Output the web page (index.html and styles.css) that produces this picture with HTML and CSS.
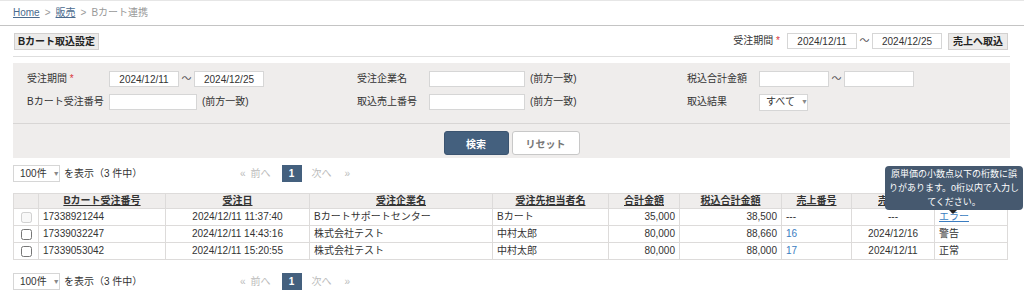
FILE: index.html
```html
<!DOCTYPE html>
<html lang="ja">
  <head>
    <meta charset="UTF-8" />
    <title>Bカート連携</title>
    <link rel="stylesheet" href="styles.css">
  </head>
  <body>
    <div class="breadcrumb">
      <a href="#">Home</a><span class="sep">&gt;</span><a href="#">販売</a><span class="sep">&gt;</span><span class="current">Bカート連携</span>
    </div>

    <div class="page">
      <div class="toolbar">
        <button class="btn">Bカート取込設定</button>
        <div class="import">
          <span class="import-label">受注期間 <em>*</em></span>
          <input class="field date" type="text" value="2024/12/11" />
          <span class="tilde">〜</span>
          <input class="field date" type="text" value="2024/12/25" />
          <button class="btn">売上へ取込</button>
        </div>
      </div>

      <div class="search">
        <div class="fields">
          <div class="cell">
            <label>受注期間 <em>*</em></label>
            <input class="field date" type="text" value="2024/12/11" />
            <span class="tilde">〜</span>
            <input class="field date" type="text" value="2024/12/25" />
          </div>
          <div class="cell short">
            <label>受注企業名</label>
            <input class="field wide" type="text" />
            <span class="hint">(前方一致)</span>
          </div>
          <div class="cell short">
            <label>税込合計金額</label>
            <input class="field amount" type="text" />
            <span class="tilde">〜</span>
            <input class="field amount" type="text" />
          </div>
          <div class="cell">
            <label>Bカート受注番号</label>
            <input class="field mid" type="text" />
            <span class="hint">(前方一致)</span>
          </div>
          <div class="cell short">
            <label>取込売上番号</label>
            <input class="field wide" type="text" />
            <span class="hint">(前方一致)</span>
          </div>
          <div class="cell short">
            <label>取込結果</label>
            <span class="dropdown result">すべて <i>▼</i></span>
          </div>
        </div>
        <div class="actions">
          <button class="btn-search">検索</button>
          <button class="btn-reset">リセット</button>
        </div>
      </div>

      <div class="pager-row">
        <div class="per-page">
          <span class="dropdown">100件 <i>▼</i></span>
          <span>を表示（3 件中）</span>
        </div>
        <div class="pager">
          <span class="off">«</span><span class="off">前へ</span><span class="current-page">1</span><span class="off">次へ</span><span class="off">»</span>
        </div>
      </div>

      <table class="orders">
        <thead>
          <tr>
            <th></th>
            <th><u>Bカート受注番号</u></th>
            <th><u>受注日</u></th>
            <th><u>受注企業名</u></th>
            <th><u>受注先担当者名</u></th>
            <th><u>合計金額</u></th>
            <th><u>税込合計金額</u></th>
            <th><u>売上番号</u></th>
            <th><u>売上日</u></th>
            <th><u>結果</u></th>
          </tr>
        </thead>
        <tbody>
          <tr>
            <td class="chk"><input type="checkbox" disabled /></td>
            <td>17338921244</td>
            <td class="center">2024/12/11 11:37:40</td>
            <td>Bカートサポートセンター</td>
            <td>Bカート</td>
            <td class="num">35,000</td>
            <td class="num">38,500</td>
            <td>---</td>
            <td class="center">---</td>
            <td><span class="err"><a href="#">エラー</a><span class="tip">原単価の小数点以下の桁数に誤<br />りがあります。0桁以内で入力し<br />てください。</span></span></td>
          </tr>
          <tr>
            <td class="chk"><input type="checkbox" /></td>
            <td>17339032247</td>
            <td class="center">2024/12/11 14:43:16</td>
            <td>株式会社テスト</td>
            <td>中村太郎</td>
            <td class="num">80,000</td>
            <td class="num">88,660</td>
            <td><a class="plain" href="#">16</a></td>
            <td class="center">2024/12/16</td>
            <td>警告</td>
          </tr>
          <tr>
            <td class="chk"><input type="checkbox" /></td>
            <td>17339053042</td>
            <td class="center">2024/12/11 15:20:55</td>
            <td>株式会社テスト</td>
            <td>中村太郎</td>
            <td class="num">80,000</td>
            <td class="num">88,000</td>
            <td><a class="plain" href="#">17</a></td>
            <td class="center">2024/12/11</td>
            <td>正常</td>
          </tr>
        </tbody>
      </table>

      <div class="pager-row bottom">
        <div class="per-page">
          <span class="dropdown">100件 <i>▼</i></span>
          <span>を表示（3 件中）</span>
        </div>
        <div class="pager">
          <span class="off">«</span><span class="off">前へ</span><span class="current-page">1</span><span class="off">次へ</span><span class="off">»</span>
        </div>
      </div>
    </div>
  </body>
</html>
```

FILE: styles.css
```css
body {
  margin: 0;
  background-color: #fff;
  color: #333;
  font-family: "Liberation Sans Narrow", "Liberation Sans", "Noto Sans CJK JP", sans-serif;
  font-size: 10px;
  line-height: 14px;
}

input,
button {
  font-family: inherit;
  font-size: 10px;
}

em {
  color: #d9343a;
  font-style: normal;
}

/* パンくず */
.breadcrumb {
  height: 24px;
  padding-left: 13px;
  display: flex;
  align-items: center;
  border-top: 1px solid #e6e6e6;
  border-bottom: 1px solid #c4c4c4;
  color: #999;
  white-space: nowrap;
}

.breadcrumb a {
  color: #4a6a8e;
}

.breadcrumb .sep {
  margin: 0 5px;
  color: #999;
}

.page {
  position: relative;
  padding: 0 14px 0 13px;
  white-space: nowrap;
}

/* ツールバー */
.toolbar {
  height: 30px;
  display: flex;
  align-items: center;
  justify-content: space-between;
  border-bottom: 1px solid #dedede;
}

.btn {
  height: 17px;
  padding: 0 7px;
  background-color: #ecebea;
  border: 1px solid #d2d0cf;
  color: #222;
  font-weight: bold;
  line-height: 15px;
}

.toolbar > .btn {
  width: 85px;
  padding: 0;
  margin-left: 1px;
}

.import {
  display: flex;
  align-items: center;
  padding-right: 2px;
}

.import-label {
  margin-right: 7px;
}

.import .btn {
  margin-left: 6px;
  width: 60px;
  padding: 0;
}

.field {
  height: 16px;
  box-sizing: border-box;
  border: 1px solid #d6d6d6;
  background-color: #fff;
  padding: 0 3px;
  color: #333;
  line-height: 14px;
}

.field.date {
  width: 70px;
  text-align: center;
}

.tilde {
  width: 15px;
  text-align: center;
  color: #555;
}

/* 検索パネル */
.search {
  margin-top: 6px;
  background-color: #efedec;
}

.fields {
  display: grid;
  grid-template-columns: 330px 330px 1fr;
  row-gap: 7px;
  padding: 8px 14px 13px;
  border-bottom: 1px solid #d8d6d5;
}

.cell {
  display: flex;
  align-items: center;
  height: 16px;
}

.cell label {
  width: 82px;
  flex-shrink: 0;
}

.cell.short label {
  width: 72px;
}

.field.wide {
  width: 96px;
}

.field.mid {
  width: 88px;
}

.field.amount {
  width: 70px;
}

.hint {
  margin-left: 5px;
}

.dropdown {
  display: inline-flex;
  align-items: center;
  justify-content: space-between;
  box-sizing: border-box;
  height: 17px;
  padding: 0 5px 0 6px;
  background-color: #fff;
  border: 1px solid #d6d6d6;
  white-space: nowrap;
}

.dropdown i {
  font-style: normal;
  font-size: 7px;
  color: #888;
  margin-left: 6px;
}

.dropdown.result {
  width: 49px;
}

.actions {
  display: flex;
  justify-content: center;
  gap: 3px;
  padding: 7px 0 3px;
}

.btn-search,
.btn-reset {
  width: 65px;
  height: 24px;
  border-radius: 3px;
  font-weight: bold;
}

.btn-search {
  background-color: #44607e;
  border: 1px solid #3b5470;
  color: #fff;
}

.btn-reset {
  width: 68px;
  background-color: #fff;
  border: 1px solid #c8c8c8;
  color: #777;
}

/* ページャー */
.pager-row {
  display: flex;
  align-items: center;
  height: 17px;
  margin-top: 7px;
}

.pager-row.bottom {
  margin-top: 13px;
}

.per-page {
  display: flex;
  align-items: center;
  width: 227px;
}

.per-page .dropdown {
  width: 47px;
  margin-right: 4px;
}

.pager {
  display: flex;
  align-items: center;
}

.pager .off {
  color: #bbb;
  margin-right: 5px;
}

.pager .off:nth-child(2) {
  margin-right: 11px;
}

.pager .off:nth-child(4) {
  margin-right: 13px;
}

.pager .current-page {
  width: 20px;
  height: 17px;
  margin-right: 10px;
  background-color: #44607e;
  color: #fff;
  font-weight: bold;
  text-align: center;
  line-height: 17px;
}

/* 一覧 */
.orders {
  width: 995px;
  margin-top: 11px;
  border-collapse: collapse;
  table-layout: fixed;
}

.orders th,
.orders td {
  border: 1px solid #dddbda;
  padding: 0 4px;
  white-space: nowrap;
}

.orders th {
  height: 14px;
  background-color: #efedec;
  font-weight: bold;
  text-align: center;
  color: #333;
}

.orders td {
  height: 16px;
}

.orders th:nth-child(1) { width: 16px; }
.orders th:nth-child(2) { width: 118px; }
.orders th:nth-child(3) { width: 135px; }
.orders th:nth-child(4) { width: 174px; }
.orders th:nth-child(5) { width: 107px; }
.orders th:nth-child(6) { width: 62px; }
.orders th:nth-child(7) { width: 93px; }
.orders th:nth-child(8) { width: 61px; }
.orders th:nth-child(9) { width: 74px; }
.orders th:nth-child(10) { width: 64px; }

.orders .chk {
  text-align: center;
  padding: 0;
}

.orders .chk input {
  margin: 0;
  width: 11px;
  height: 11px;
  vertical-align: middle;
}

.orders .center {
  text-align: center;
}

.orders .num {
  text-align: right;
}

.orders a {
  color: #3a7cc0;
}

.orders a.plain {
  text-decoration: none;
}

.err {
  position: relative;
  display: inline-block;
}

.tip {
  position: absolute;
  left: -54px;
  bottom: 100%;
  width: 132px;
  padding: 1px 3px;
  background-color: #46596f;
  border-radius: 4px;
  color: #fff;
  font-size: 9px;
  text-align: center;
  white-space: nowrap;
  line-height: 14px;
  z-index: 10;
}

.tip::after {
  content: "";
  position: absolute;
  left: 64px;
  bottom: -4px;
  border-left: 4px solid transparent;
  border-right: 4px solid transparent;
  border-top: 4px solid #222;
}
```
